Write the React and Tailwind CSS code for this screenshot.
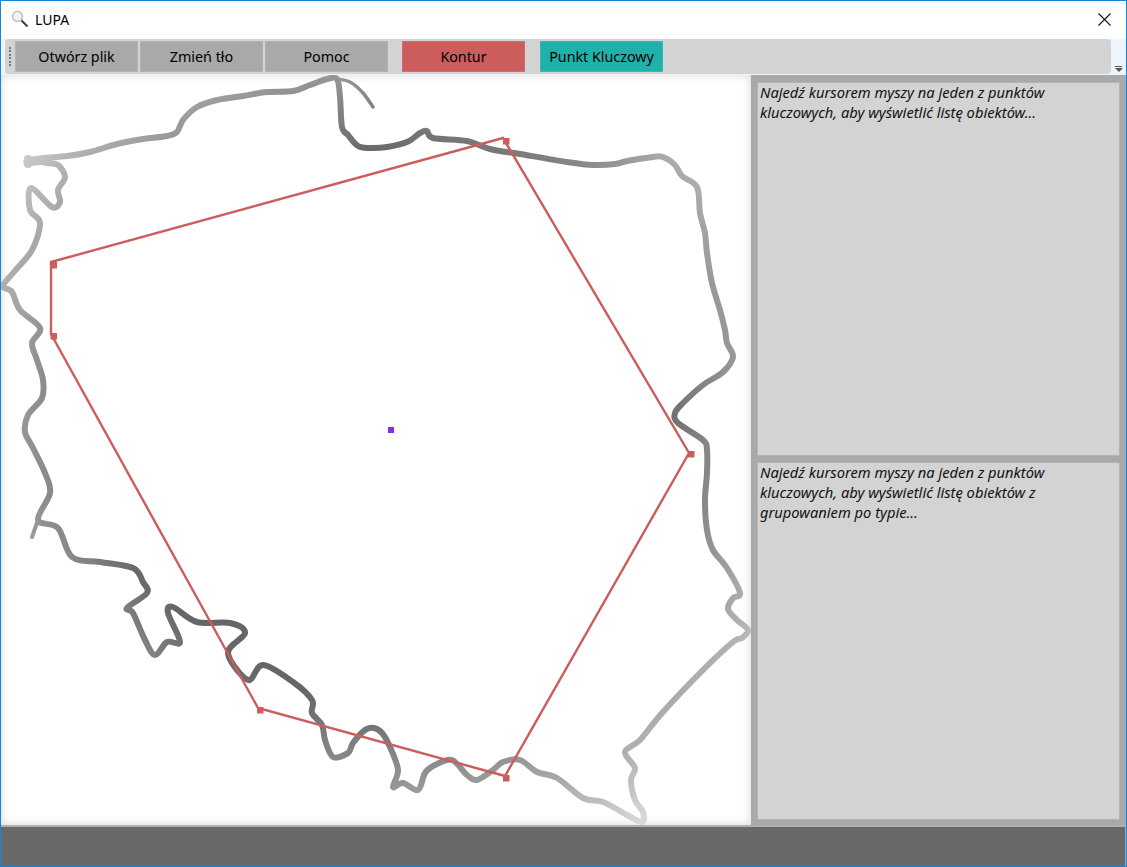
const outlinePoints =
  '28,160 43,158 67,156 90,152 117,144 143,139 167,136 177,132 183,120 197,107 217,100 243,96 267,92 293,91 310,85 327,79 337,79 340,97 342,127 348,135 358,146 370,148 387,147 407,142 420,133 427,131 433,138 467,141 490,149 520,154 567,162 593,165 615,164 627,161 653,157 663,157 675,165 682,176 697,187 700,213 705,233 707,253 712,283 720,310 725,330 727,343 733,357 723,372 703,385 683,403 675,413 678,423 703,440 707,450 707,473 705,500 707,530 713,550 727,568 740,593 733,598 728,609 737,620 748,630 742,638 733,642 703,670 663,712 640,740 625,752 635,768 631,780 635,800 643,812 642,822 627,815 603,802 583,798 557,778 537,772 520,760 503,762 493,770 477,780 467,775 452,760 435,765 425,773 418,790 403,783 393,787 398,770 390,747 382,733 374,728 365,730 353,743 348,753 333,757 325,740 322,725 312,713 312,700 293,682 263,665 248,680 228,653 245,633 230,623 197,622 173,607 168,613 180,642 167,642 155,655 145,640 133,613 127,608 147,593 143,582 133,568 100,562 72,557 58,528 38,520 50,493 45,473 33,448 25,432 28,415 42,398 43,380 37,360 32,343 40,328 20,310 12,292 3,286 13,273 32,250 40,223 30,210 31,188 52,207 60,202 58,190 65,177 58,165 47,163 42,162 28,163';

// catmull-rom through the traced points, the border is a soft curve in the picture
function smoothPath(text, closed) {
  const pts = text.split(' ').map((p) => p.split(',').map(Number));
  const at = (i) => (closed ? pts[(i + pts.length) % pts.length] : pts[Math.max(0, Math.min(pts.length - 1, i))]);
  const last = closed ? pts.length : pts.length - 1;
  let d = `M${pts[0][0]} ${pts[0][1]}`;
  for (let i = 0; i < last; i++) {
    const [p0, p1, p2, p3] = [at(i - 1), at(i), at(i + 1), at(i + 2)];
    const c1 = [p1[0] + (p2[0] - p0[0]) / 6, p1[1] + (p2[1] - p0[1]) / 6];
    const c2 = [p2[0] - (p3[0] - p1[0]) / 6, p2[1] - (p3[1] - p1[1]) / 6];
    d += ` C${c1[0].toFixed(1)} ${c1[1].toFixed(1)} ${c2[0].toFixed(1)} ${c2[1].toFixed(1)} ${p2[0]} ${p2[1]}`;
  }
  return d + (closed ? ' Z' : '');
}

const outline = smoothPath(outlinePoints, true);
const spit = smoothPath('337,79 350,82 363,93 373,107', false);

const contour = '51,262 503,138 689,453 505,776 258,708 51,334';

const keyPoints = [
  [50.5, 262],
  [50.5, 333],
  [257, 707],
  [503, 775],
  [688, 451],
  [503, 138],
];

function ToolButton({ color, children }) {
  return (
    <button className={`w-[123px] h-[31px] border border-white/10 text-[14.3px] text-black ${color}`}>
      {children}
    </button>
  );
}

function InfoBox({ className, children }) {
  return (
    <div className={`bg-[#d3d3d3] border border-[#b4b4b8] px-[2px] text-[14.7px] leading-[20px] italic text-[#111] ${className}`}>
      <p className="-mt-[1px]">{children}</p>
    </div>
  );
}

function PolandMap() {
  return (
    <svg className="block w-[750px] h-[751px]" viewBox="1 75 750 751">
      <defs>
        <radialGradient id="fade" gradientUnits="userSpaceOnUse" cx="380" cy="430" r="470">
          <stop offset="0.58" stopColor="#666666" />
          <stop offset="0.75" stopColor="#949494" />
          <stop offset="0.88" stopColor="#b4b4b4" />
          <stop offset="1" stopColor="#d8d8d8" />
        </radialGradient>
        <filter id="soft">
          <feGaussianBlur stdDeviation="0.7" />
        </filter>
      </defs>
      <g fill="none" stroke="url(#fade)" strokeWidth="6" strokeLinejoin="round" strokeLinecap="round" filter="url(#soft)">
        <path d={outline} />
        <path d={spit} strokeWidth="3.5" />
        <path d="M38 520 L32 537" strokeWidth="4" />
        <path d="M28 159 L28 164" strokeWidth="8" />
      </g>
      <polygon points={contour} fill="none" stroke="#cd5c5c" strokeWidth="2.4" />
      {keyPoints.map(([x, y]) => (
        <rect key={`${x}-${y}`} x={x} y={y} width="6.5" height="6.5" fill="#cd5c5c" />
      ))}
      <rect x="388" y="427" width="6" height="6" fill="#8a2be2" />
    </svg>
  );
}

export default function App() {
  return (
    <div className="w-[1127px] h-[867px] flex flex-col bg-white border border-[#1883d7] overflow-hidden font-['Noto_Sans',sans-serif]">
      {/* Title bar */}
      <div className="h-[38px] shrink-0 flex items-center pl-[10px] pr-[15px] pb-[2px]">
        <svg width="18" height="18" viewBox="0 0 18 18">
          <circle cx="6.5" cy="6.5" r="5" fill="#f1f3f5" stroke="#b9bdc2" strokeWidth="1.4" />
          <path d="M4 4.5 A3.5 3.5 0 0 1 7 3" fill="none" stroke="#ffffff" strokeWidth="1.2" />
          <path d="M10.5 10.5 L16.5 16.5" stroke="#3a3a3a" strokeWidth="2" />
        </svg>
        <span className="ml-[6px] text-[14px] text-black">LUPA</span>
        <svg className="ml-auto" width="13" height="13" viewBox="0 0 13 13">
          <path d="M0.5 0.5 L12.5 12.5 M12.5 0.5 L0.5 12.5" stroke="#111" strokeWidth="1.1" />
        </svg>
      </div>

      {/* Toolbar */}
      <div className="h-[36px] shrink-0 flex bg-[#eef4fc]">
        <div className="ml-[4px] w-[1106px] h-[35px] flex items-center bg-[#d3d3d3] rounded-[4px]">
          <div className="w-[4px] h-[24px] ml-[3px] mr-[3px] flex flex-col justify-between items-center py-[2px]">
            {[0, 1, 2, 3, 4, 5].map((i) => (
              <div key={i} className="w-[2px] h-[2px] bg-[#777]" />
            ))}
          </div>
          <div className="flex gap-[2px]">
            <ToolButton color="bg-[#a9a9a9]">Otwórz plik</ToolButton>
            <ToolButton color="bg-[#a9a9a9]">Zmień tło</ToolButton>
            <ToolButton color="bg-[#a9a9a9]">Pomoc</ToolButton>
          </div>
          <div className="ml-[14px] flex gap-[15px]">
            <ToolButton color="bg-[#cd5c5c]">Kontur</ToolButton>
            <ToolButton color="bg-[#20b2aa]">Punkt Kluczowy</ToolButton>
          </div>
        </div>
        <div className="flex-1 flex flex-col items-center justify-end pb-[3px]">
          <div className="w-[7px] h-[1px] bg-[#555] mb-[1px]" />
          <div className="w-0 h-0 border-x-[4px] border-x-transparent border-t-[4px] border-t-[#555]" />
        </div>
      </div>

      {/* Map and lists */}
      <div className="flex-1 min-h-0 flex">
        <div className="w-[750px] shadow-[inset_0_0_10px_rgba(0,0,0,0.16)]">
          <PolandMap />
        </div>
        <div className="flex-1 flex flex-col gap-[6px] bg-[#a9a9a9] pt-[7px] pb-[5px] pl-[6px] pr-[6px]">
          <InfoBox className="h-[374px]">
            Najedź kursorem myszy na jeden z punktów kluczowych, aby wyświetlić listę obiektów...
          </InfoBox>
          <InfoBox className="flex-1">
            Najedź kursorem myszy na jeden z punktów kluczowych, aby wyświetlić listę obiektów z grupowaniem po typie...
          </InfoBox>
        </div>
      </div>

      {/* Status bar */}
      <div className="h-[41px] shrink-0 bg-[#696969] border-t-2 border-t-[#b0b0b4] border-r border-r-[#a9a9a9]" />
    </div>
  );
}
